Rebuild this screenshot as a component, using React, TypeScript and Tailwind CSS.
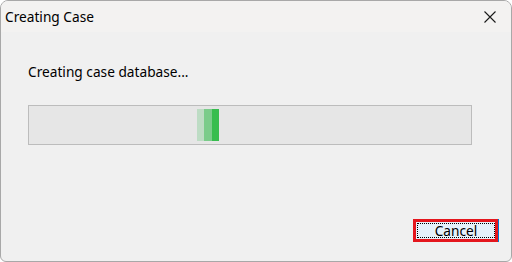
import React from "react";

export default function App() {
  return (
    <div className="w-[512px] h-[262px] bg-white" style={{ fontFamily: '"Noto Sans", "Open Sans", sans-serif' }}>
      <div className="w-full h-full flex flex-col border border-[#a8a8a8] rounded-t-[8px] rounded-b-[6px] overflow-hidden bg-[#f0f0f0]">
        <div className="h-[31px] bg-[#f3f2f1] flex items-center justify-between pl-[4px] pr-[13px] shrink-0">
          <span className="text-[13.7px] text-black leading-none">Creating Case</span>
          <svg width="14" height="14" viewBox="0 0 14 14" className="mr-[1px]">
            <path d="M1.5 1.5 L12.5 12.5 M12.5 1.5 L1.5 12.5" stroke="#1a1a1a" strokeWidth="1.1" fill="none" />
          </svg>
        </div>
        <div className="flex-1 flex flex-col pl-[27px] pr-[39px]">
          <div className="mt-[31px] text-[13.7px] leading-[18px] text-black">Creating case database...</div>
          <div className="mt-[24px] h-[40px] border border-[#bcbcbc] bg-[#e6e6e6] flex items-center pl-[168px]">
            <div className="h-[32px] w-[7px] bg-[#bddcc4]" />
            <div className="h-[32px] w-[8px] bg-[#7acc8a]" />
            <div className="h-[32px] w-[7px] bg-[#37bd4e]" />
          </div>
          <div className="flex justify-end mt-[74px] -mr-[27px]">
            <div className="relative w-[86px] h-[23px]">
              <div className="absolute inset-0 border border-[#0078d7] bg-[#e5f1fb] flex items-center justify-center">
                <div className="absolute inset-[3px] border border-dotted border-black" />
                <span className="text-[13.7px] text-black leading-none relative">Cancel</span>
              </div>
              <div className="absolute left-0 top-0 w-[85px] h-[23px] border-[3px] border-[#e4161d]" />
            </div>
          </div>
        </div>
      </div>
    </div>
  );
}
